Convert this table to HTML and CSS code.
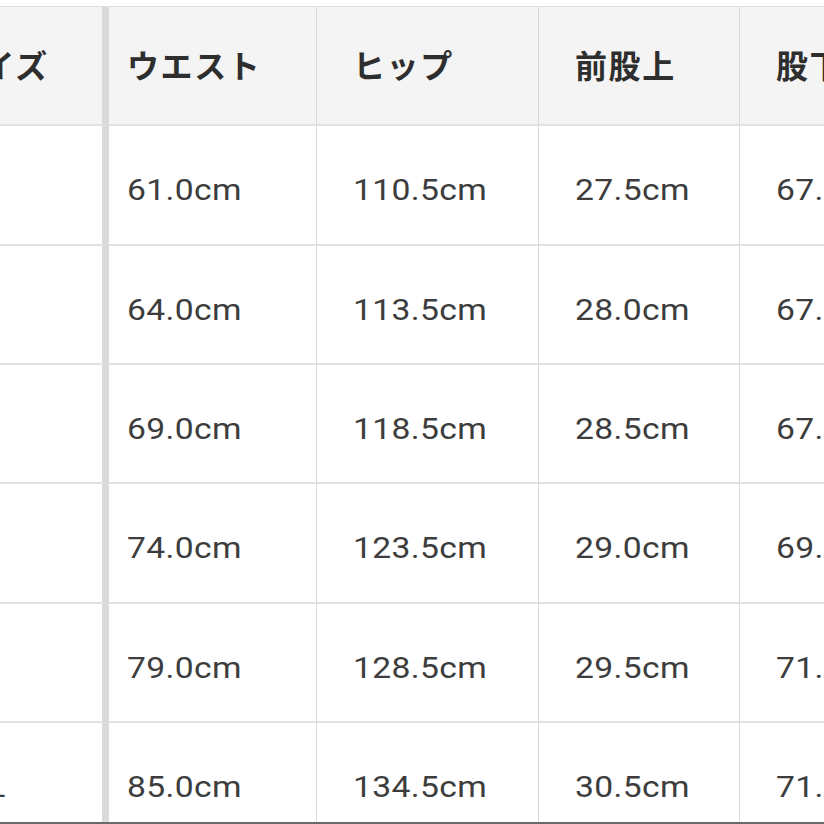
FILE: index.html
```html
<!DOCTYPE html>
<html lang="ja">
<head>
<meta charset="utf-8">
<title>サイズ表</title>
<link rel="stylesheet" href="styles.css">
</head>
<body>
<div class="wrap">
  <div class="sheet">
    <div class="cell th c1"><span>サイズ</span></div>
    <div class="cell th c2"><span>ウエスト</span></div>
    <div class="cell th"><span>ヒップ</span></div>
    <div class="cell th"><span>前股上</span></div>
    <div class="cell th last"><span>股下</span></div>

    <div class="cell td c1"><span>S</span></div>
    <div class="cell td c2"><span>61.0cm</span></div>
    <div class="cell td"><span>110.5cm</span></div>
    <div class="cell td"><span>27.5cm</span></div>
    <div class="cell td last"><span>67.0cm</span></div>

    <div class="cell td c1"><span>M</span></div>
    <div class="cell td c2"><span>64.0cm</span></div>
    <div class="cell td"><span>113.5cm</span></div>
    <div class="cell td"><span>28.0cm</span></div>
    <div class="cell td last"><span>67.5cm</span></div>

    <div class="cell td c1"><span>L</span></div>
    <div class="cell td c2"><span>69.0cm</span></div>
    <div class="cell td"><span>118.5cm</span></div>
    <div class="cell td"><span>28.5cm</span></div>
    <div class="cell td last"><span>67.0cm</span></div>

    <div class="cell td c1"><span>XL</span></div>
    <div class="cell td c2"><span>74.0cm</span></div>
    <div class="cell td"><span>123.5cm</span></div>
    <div class="cell td"><span>29.0cm</span></div>
    <div class="cell td last"><span>69.0cm</span></div>

    <div class="cell td c1"><span>XXL</span></div>
    <div class="cell td c2"><span>79.0cm</span></div>
    <div class="cell td"><span>128.5cm</span></div>
    <div class="cell td"><span>29.5cm</span></div>
    <div class="cell td last"><span>71.0cm</span></div>

    <div class="cell td c1"><span>XXXL</span></div>
    <div class="cell td c2"><span>85.0cm</span></div>
    <div class="cell td"><span>134.5cm</span></div>
    <div class="cell td"><span>30.5cm</span></div>
    <div class="cell td last"><span>71.0cm</span></div>
  </div>
</div>
</body>
</html>
```

FILE: styles.css
```css
html, body {
  margin: 0;
  padding: 0;
  background: #ffffff;
  overflow: hidden;
  width: 824px;
  height: 824px;
}

body::after {
  content: "";
  position: fixed;
  left: 0;
  right: 0;
  bottom: 0;
  height: 2px;
  background: #6a6a6a;
}

.wrap {
  padding-top: 6px;
  overflow: hidden;
  height: 818px;
}

.sheet {
  display: grid;
  margin-left: -93px;
  width: max-content;
  grid-template-columns: 202px 208px 222px 201px 220px;
  grid-template-rows: 119px 120px 119px 119px 120px 119px 120px;
  border-top: 1px solid #dedede;
}

.cell {
  display: flex;
  align-items: center;
  padding-left: 36px;
  border-bottom: 2px solid #e1e1e1;
  border-right: 1px solid #d9d9d9;
  box-sizing: border-box;
  white-space: nowrap;
  overflow: hidden;
}

.cell span {
  display: inline-block;
  transform-origin: left center;
}

.cell.c1 {
  border-right: 7px solid #dadada;
}

.cell.c2 {
  padding-left: 18px;
}

.th {
  background: #f4f4f4;
  color: #2e2e2e;
  font-family: "Noto Sans CJK JP", "Noto Sans", sans-serif;
  font-weight: 700;
  font-size: 32px;
  letter-spacing: 1.6px;
  padding-bottom: 4px;
}

.th.c1 {
  padding-left: 42px;
}

.td {
  background: #ffffff;
  color: #3d3d3d;
  font-family: Roboto, "Noto Sans", sans-serif;
  font-weight: 400;
  font-size: 29px;
  letter-spacing: 0.3px;
  padding-top: 10px;
}

.td span {
  transform: scaleX(1.16);
}

.td.c1 {
  padding-left: 16px;
}
```
